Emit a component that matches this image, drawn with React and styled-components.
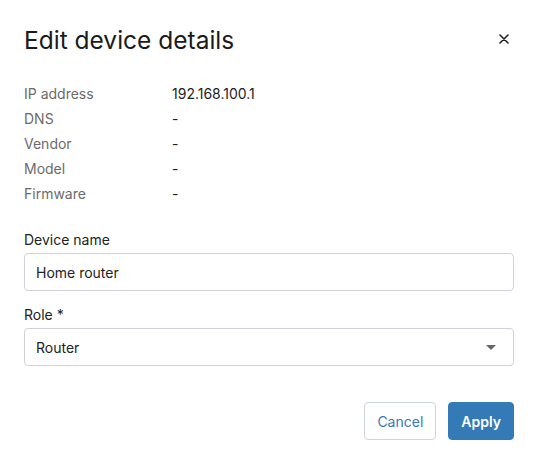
import React from "react";
import styled, { createGlobalStyle } from "styled-components";

const Global = createGlobalStyle`
  html, body { margin: 0; padding: 0; background: #fff; }
  body { font-family: Inter, "Noto Sans", sans-serif; color: #222; }
  * { box-sizing: border-box; }
`;

const Dialog = styled.div`
  width: 534px;
  padding: 26px 20px 20px 24px;
  display: flex;
  flex-direction: column;
`;

const Header = styled.div`
  display: flex;
  justify-content: space-between;
  align-items: flex-start;
`;

const Title = styled.h2`
  margin: 0;
  font-size: 24.5px;
  line-height: 28px;
  font-weight: 400;
  color: #1b1b1b;
`;

const CloseButton = styled.button`
  border: none;
  background: none;
  padding: 0;
  width: 20px;
  height: 20px;
  margin-top: 3px;
  display: flex;
  align-items: center;
  justify-content: center;
  cursor: pointer;
  color: #222;
`;

const Details = styled.dl`
  margin: 27px 0 0;
  display: grid;
  grid-template-columns: 148px 1fr;
  grid-auto-rows: 25px;
  font-size: 14px;
  line-height: 25px;
`;

const Term = styled.dt`
  color: #6b6b6b;
`;

const Value = styled.dd`
  margin: 0;
  color: #1e1e1e;
`;

const Field = styled.div`
  display: flex;
  flex-direction: column;
  margin-top: ${(p) => p.$gap}px;
  width: 490px;
`;

const Label = styled.label`
  font-size: 14px;
  line-height: 20px;
  color: #222;
  margin-bottom: 3px;
`;

const Box = styled.div`
  height: 38px;
  border: 1px solid #cfd2d8;
  border-radius: 4px;
  padding: 0 11px;
  display: flex;
  align-items: center;
  justify-content: space-between;
  font-size: 14px;
  color: #222;
  background: #fff;
`;

const Caret = styled.span`
  width: 0;
  height: 0;
  border-left: 5px solid transparent;
  border-right: 5px solid transparent;
  border-top: 5px solid #666;
  margin-right: 6px;
`;

const Footer = styled.div`
  display: flex;
  justify-content: flex-end;
  gap: 12px;
  margin-top: 36px;
  width: 490px;
`;

const Button = styled.button`
  height: 38px;
  border-radius: 4px;
  font-family: Inter, "Noto Sans", sans-serif;
  font-size: 14px;
  padding: 0 12px;
  border: 1px solid ${(p) => (p.$primary ? "#337ab7" : "#cfd3da")};
  background: ${(p) => (p.$primary ? "#337ab7" : "#fff")};
  color: ${(p) => (p.$primary ? "#fff" : "#3a78b5")};
  font-weight: ${(p) => (p.$primary ? 600 : 400)};
  cursor: pointer;
`;

const rows = [
  ["IP address", "192.168.100.1"],
  ["DNS", "-"],
  ["Vendor", "-"],
  ["Model", "-"],
  ["Firmware", "-"],
];

export default function App() {
  return (
    <>
      <Global />
      <Dialog>
        <Header>
          <Title>Edit device details</Title>
          <CloseButton aria-label="Close">
            <svg width="10" height="10" viewBox="0 0 10 10">
              <path d="M1 1L9 9M9 1L1 9" stroke="#222" strokeWidth="1.6" strokeLinecap="round" />
            </svg>
          </CloseButton>
        </Header>
        <Details>
          {rows.map(([k, v]) => (
            <React.Fragment key={k}>
              <Term>{k}</Term>
              <Value>{v}</Value>
            </React.Fragment>
          ))}
        </Details>
        <Field $gap={24}>
          <Label>Device name</Label>
          <Box>Home router</Box>
        </Field>
        <Field $gap={14}>
          <Label>Role *</Label>
          <Box>
            Router
            <Caret />
          </Box>
        </Field>
        <Footer>
          <Button>Cancel</Button>
          <Button $primary>Apply</Button>
        </Footer>
      </Dialog>
    </>
  );
}
